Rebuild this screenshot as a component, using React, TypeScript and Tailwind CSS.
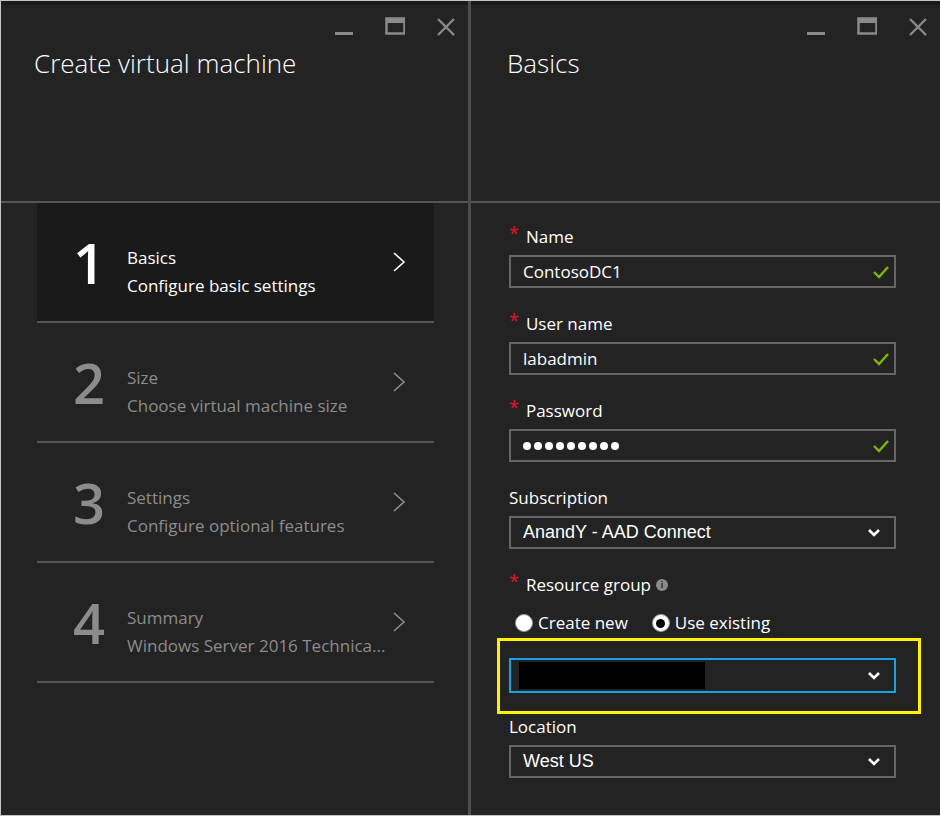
const ui = { fontFamily: '"Open Sans", "Noto Sans", sans-serif' };
const arial = { fontFamily: '"Liberation Sans", Arial, sans-serif' };

function WindowControls() {
  return (
    <div className="flex justify-end items-start h-[36px] pt-[12px] pr-[12px] gap-[31px]">
      <svg width="20" height="20" viewBox="0 0 20 20">
        <rect x="1" y="15" width="18" height="3" fill="#8a8a8a" />
      </svg>
      <svg width="20" height="20" viewBox="0 0 20 20">
        <rect x="1.5" y="1.5" width="18" height="15" fill="none" stroke="#8a8a8a" strokeWidth="2.5" />
        <rect x="1" y="1" width="19" height="5" fill="#8a8a8a" />
      </svg>
      <svg width="20" height="20" viewBox="0 0 20 20">
        <path d="M2 2 L18 18 M18 2 L2 18" stroke="#8a8a8a" strokeWidth="2.4" />
      </svg>
    </div>
  );
}

function Chevron({ color }: { color: string }) {
  return (
    <svg width="14" height="22" viewBox="0 0 14 22">
      <path d="M2 2 L12 11 L2 20" fill="none" stroke={color} strokeWidth="1.6" />
    </svg>
  );
}

const steps = [
  { n: "1", title: "Basics", sub: "Configure basic settings", active: true },
  { n: "2", title: "Size", sub: "Choose virtual machine size", active: false },
  { n: "3", title: "Settings", sub: "Configure optional features", active: false },
  { n: "4", title: "Summary", sub: "Windows Server 2016 Technica...", active: false },
];

function Step({ n, title, sub, active }: (typeof steps)[number]) {
  return (
    <div
      className={`flex items-center h-[120px] border-b-2 border-[#555555] ${active ? "bg-[#1a1a1a]" : ""}`}
    >
      <div
        className={`w-[90px] shrink-0 pl-[36px] text-[56px] font-semibold leading-none ${active ? "text-white" : "text-[#8c8c8c]"}`}
        style={ui}
      >
        {n}
      </div>
      <div className={`flex-1 mt-[20px] text-[17px] leading-[28px] whitespace-nowrap ${active ? "text-white" : "text-[#8c8c8c]"}`} style={ui}>
        <div>{title}</div>
        <div>{sub}</div>
      </div>
      <div className="pr-[28px]">
        <Chevron color={active ? "#ffffff" : "#8c8c8c"} />
      </div>
    </div>
  );
}

function Label({ text, required }: { text: string; required?: boolean }) {
  return (
    <div className="flex items-center h-[24px] mb-[6px] text-[17px] text-white" style={ui}>
      {required && <span className="text-[#e81123] text-[18px] leading-none -mt-[8px] mr-[7px]">*</span>}
      <span>{text}</span>
    </div>
  );
}

function Check() {
  return (
    <svg width="18" height="14" viewBox="0 0 18 14">
      <path d="M2 7 L7 12 L16 2" fill="none" stroke="#7fba00" strokeWidth="2.4" />
    </svg>
  );
}

function Caret() {
  return (
    <svg width="14" height="10" viewBox="0 0 14 10">
      <path d="M2 2 L7 7 L12 2" fill="none" stroke="#ffffff" strokeWidth="2.6" />
    </svg>
  );
}

function TextField({ children }: { children: React.ReactNode }) {
  return (
    <div className="flex items-center h-[33px] border-2 border-[#666666] pl-[12px] pr-[4px] text-[17px] text-white" style={ui}>
      <div className="flex-1">{children}</div>
      <Check />
    </div>
  );
}

function SelectField({ children, tint, tall }: { children: React.ReactNode; tint?: string; tall?: boolean }) {
  return (
    <div
      className={`flex items-center ${tall ? "h-[35px]" : "h-[33px]"} border-2 ${tint ?? "border-[#666666]"} pl-[12px] text-[18px] text-white`}
      style={arial}
    >
      <div className="flex-1">{children}</div>
      <div className="w-[40px] h-full flex items-center justify-center">
        <Caret />
      </div>
    </div>
  );
}

export default function App() {
  return (
    <div className="w-[940px] h-[816px] flex bg-[#232323] border-t border-l border-b border-[#c4c4c4] overflow-hidden">
      {/* Left blade */}
      <div className="w-[467px] shrink-0 flex flex-col">
        <div className="h-[196px] border-t-4 border-[#1b1b1b] border-b-2 border-b-[#555555] box-content">
          <WindowControls />
          <h1 className="pl-[33px] mt-[5px] text-[26px] font-light text-white leading-[34px]" style={ui}>
            Create virtual machine
          </h1>
        </div>
        <div className="ml-[36px] w-[397px]">
          {steps.map((s) => (
            <Step key={s.n} {...s} />
          ))}
        </div>
      </div>

      <div className="w-[3px] shrink-0 bg-[#4d4d4d]" />

      {/* Right blade */}
      <div className="flex-1 min-w-0 flex flex-col">
        <div className="h-[196px] border-t-4 border-[#1b1b1b] border-b-2 border-b-[#555555] box-content">
          <WindowControls />
          <h1 className="pl-[36px] mt-[5px] text-[26px] font-light text-white leading-[34px]" style={ui}>
            Basics
          </h1>
        </div>

        <div className="pl-[38px] pr-[44px] pt-[22px]">
          <Label text="Name" required />
          <TextField>ContosoDC1</TextField>

          <div className="mt-[24px]" />
          <Label text="User name" required />
          <TextField>labadmin</TextField>

          <div className="mt-[24px]" />
          <Label text="Password" required />
          <TextField>
            <div className="flex gap-[3px]">
              {Array.from({ length: 9 }).map((_, i) => (
                <div key={i} className="w-[8px] h-[8px] rounded-full bg-white" />
              ))}
            </div>
          </TextField>

          <div className="mt-[24px]" />
          <Label text="Subscription" />
          <SelectField>AnandY - AAD Connect</SelectField>

          <div className="mt-[24px]" />
          <div className="flex items-center h-[24px] text-[17px] text-white" style={ui}>
            <span className="text-[#e81123] text-[18px] leading-none -mt-[8px] mr-[7px]">*</span>
            <span>Resource group</span>
            <span className="ml-[5px] w-[12px] h-[12px] rounded-full bg-[#8a8a8a] text-[#232323] text-[9px] font-bold leading-[12px] text-center" style={arial}>
              i
            </span>
          </div>

          <div className="flex items-center h-[24px] mt-[14px] text-[17px] text-white" style={ui}>
            <span className="ml-[6px] w-[18px] h-[18px] rounded-full bg-white border border-[#9a9a9a]" />
            <span className="ml-[5px]">Create new</span>
            <span className="ml-[24px] w-[18px] h-[18px] rounded-full bg-white border border-[#9a9a9a] flex items-center justify-center">
              <span className="w-[9px] h-[9px] rounded-full bg-black" />
            </span>
            <span className="ml-[5px]">Use existing</span>
          </div>

          <div className="-ml-[12px] w-[424px] mt-[3px] border-[3px] border-[#fff200] pl-[9px] pt-[17px] pb-[18px]">
            <div className="w-[387px]">
              <SelectField tint="border-[#1ba1e2]" tall>
                <div className="w-[186px] h-[27px] bg-black -ml-[4px]" />
              </SelectField>
            </div>
          </div>

          <div className="mt-[1px]" />
          <Label text="Location" />
          <SelectField>West US</SelectField>
        </div>
      </div>
    </div>
  );
}
